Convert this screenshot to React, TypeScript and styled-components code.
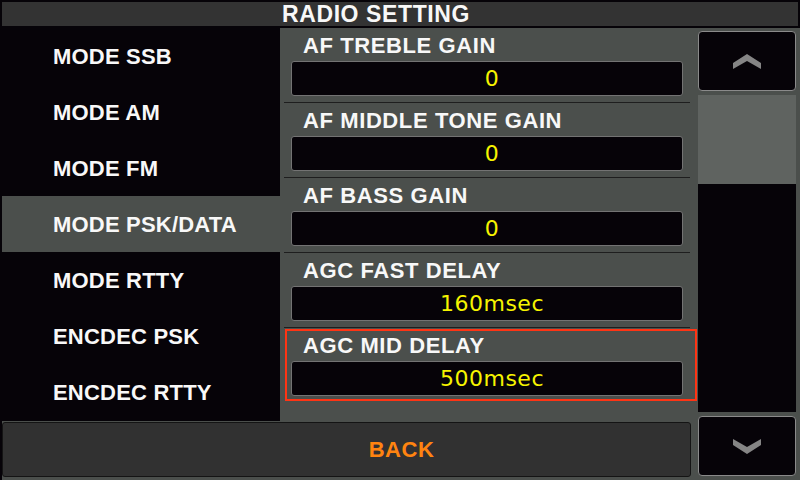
import React from 'react';
import styled, { createGlobalStyle } from 'styled-components';

const GlobalStyle = createGlobalStyle`
  html, body {
    margin: 0;
    padding: 0;
    background: #060308;
  }
  body {
    font-family: "Liberation Sans", Arial, sans-serif;
  }
`;

const Screen = styled.div`
  width: 800px;
  height: 480px;
  background: #060308;
  padding-top: 2px;
  box-sizing: border-box;
  display: flex;
  flex-direction: column;
  overflow: hidden;
`;

const TitleBar = styled.div`
  height: 24px;
  margin: 0 2px 2px;
  background: #333333;
  display: flex;
  align-items: center;
  justify-content: center;
  padding-right: 48px;
  color: #f8f8f8;
  font-size: 23px;
  font-weight: bold;
  letter-spacing: 0.6px;
  line-height: 24px;
`;

const Body = styled.div`
  flex: 1;
  display: grid;
  grid-template-columns: 280px 418px 102px;
  grid-template-rows: 393px 1fr;
`;

const MenuList = styled.div`
  grid-column: 1;
  grid-row: 1;
  background: #060308;
  padding-left: 2px;
  display: flex;
  flex-direction: column;
`;

const MenuItem = styled.div<{ $active?: boolean }>`
  height: 56px;
  line-height: 57px;
  padding-left: 51px;
  background: ${(p) => (p.$active ? '#4b4f4c' : 'transparent')};
  color: #f8f8f8;
  font-size: 22px;
  font-weight: bold;
  letter-spacing: 0.2px;
`;

const SettingsPanel = styled.div`
  grid-column: 2;
  grid-row: 1;
  background: #4b4f4c;
  padding: 0 1px 0 5px;
  display: flex;
  flex-direction: column;
`;

const Setting = styled.div<{ $selected?: boolean }>`
  position: relative;
  display: flex;
  flex-direction: column;
  height: 75px;

  &::before {
    content: '';
    display: ${(p) => (p.$selected ? 'block' : 'none')};
    position: absolute;
    top: 1px;
    left: 0;
    right: 0;
    bottom: 2px;
    border: 2px solid #ff3414;
    z-index: 2;
  }
`;

const SettingLabel = styled.div`
  margin-top: 2px;
  height: 31px;
  line-height: 32px;
  padding-left: 18px;
  color: #f8f8f8;
  font-size: 22px;
  font-weight: bold;
  letter-spacing: 0.6px;
`;

const ValueBox = styled.div`
  height: 35px;
  box-sizing: border-box;
  margin: 0 14px 0 6px;
  background: #060308;
  border: 1px solid #737373;
  border-radius: 3px;
  display: flex;
  align-items: center;
  justify-content: center;
  padding-left: 10px;
  color: #f6f400;
  font-family: "DejaVu Sans", "Liberation Sans", sans-serif;
  font-size: 22px;
  letter-spacing: 0.5px;
`;

const Rule = styled.div<{ $hidden?: boolean }>`
  margin: 6px 7px 0 -1px;
  height: 1px;
  background: ${(p) => (p.$hidden ? 'transparent' : '#1e1e1e')};
`;

const ScrollColumn = styled.div`
  grid-column: 3;
  grid-row: 1 / 3;
  background: #4b4f4c;
  padding: 3px 4px 4px 0;
  display: flex;
  flex-direction: column;
  gap: 4px;
`;

const ArrowButton = styled.div`
  height: 60px;
  box-sizing: border-box;
  background: #060308;
  border: 1px solid #8a8a8a;
  border-radius: 4px;
  display: flex;
  align-items: center;
  justify-content: center;
`;

const Track = styled.div`
  flex: 1;
  background: #060308;
`;

const Thumb = styled.div`
  height: 89px;
  background: #5f6360;
`;

const BackRow = styled.div`
  grid-column: 1 / 3;
  grid-row: 2;
  background: #4b4f4c;
  border-left: 2px solid #060308;
  padding: 1px 7px 3px 0;
  display: flex;
`;

const BackButton = styled.div`
  flex: 1;
  background: #313131;
  border: 1px solid #141414;
  border-radius: 3px;
  display: flex;
  align-items: center;
  justify-content: center;
  padding-left: 110px;
  color: #ff8410;
  font-size: 22px;
  font-weight: bold;
  letter-spacing: 0.5px;
`;

const Chevron = ({ down }: { down?: boolean }) => (
  <svg width="28" height="15" viewBox="0 0 28 15">
    <polygon
      points="14,0 28,9 28,15 14,7 0,15 0,9"
      fill="#858585"
      transform={down ? 'rotate(180 14 7.5)' : undefined}
    />
  </svg>
);

const modes = [
  'MODE SSB',
  'MODE AM',
  'MODE FM',
  'MODE PSK/DATA',
  'MODE RTTY',
  'ENCDEC PSK',
  'ENCDEC RTTY',
];

const settings = [
  { label: 'AF TREBLE GAIN', value: '0' },
  { label: 'AF MIDDLE TONE GAIN', value: '0' },
  { label: 'AF BASS GAIN', value: '0' },
  { label: 'AGC FAST DELAY', value: '160msec' },
  { label: 'AGC MID DELAY', value: '500msec' },
];

const App: React.FC = () => (
  <>
    <GlobalStyle />
    <Screen>
      <TitleBar>RADIO SETTING</TitleBar>
      <Body>
        <MenuList>
          {modes.map((m) => (
            <MenuItem key={m} $active={m === 'MODE PSK/DATA'}>
              {m}
            </MenuItem>
          ))}
        </MenuList>
        <SettingsPanel>
          {settings.map((s, i) => (
            <Setting key={s.label} $selected={i === 4}>
              <SettingLabel>{s.label}</SettingLabel>
              <ValueBox>{s.value}</ValueBox>
              <Rule $hidden={i === 4} />
            </Setting>
          ))}
        </SettingsPanel>
        <ScrollColumn>
          <ArrowButton>
            <Chevron />
          </ArrowButton>
          <Track>
            <Thumb />
          </Track>
          <ArrowButton>
            <Chevron down />
          </ArrowButton>
        </ScrollColumn>
        <BackRow>
          <BackButton>BACK</BackButton>
        </BackRow>
      </Body>
    </Screen>
  </>
);

export default App;
